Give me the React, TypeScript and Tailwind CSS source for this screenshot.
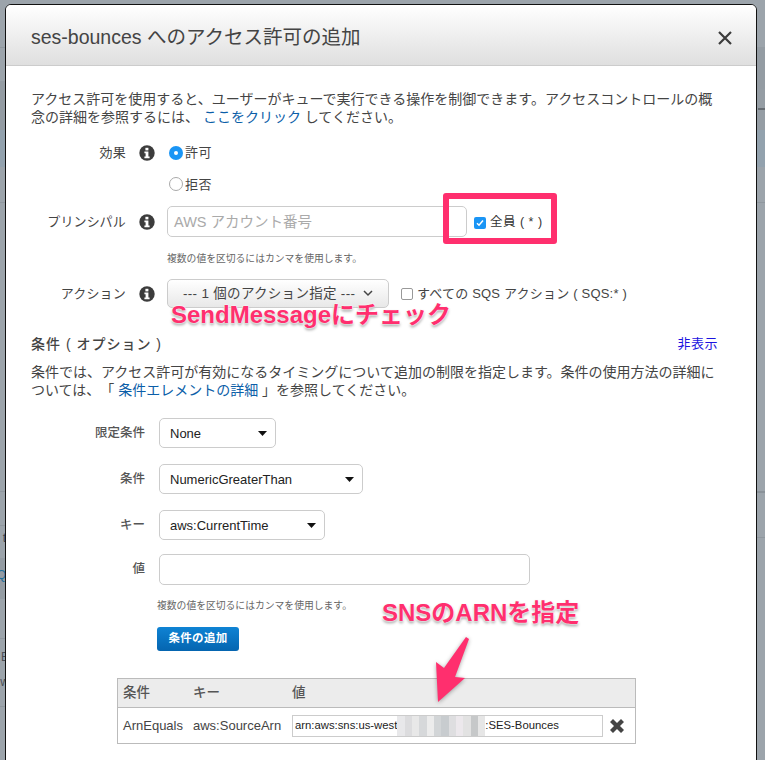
import React from "react";

const jp = "font-['Liberation_Sans','Noto_Sans_CJK_JP',sans-serif] [text-spacing-trim:space-all]";

function InfoIcon() {
  return (
    <svg width="16" height="16" viewBox="0 0 16 16" className="shrink-0">
      <circle cx="8" cy="8" r="7.7" fill="#3c3c3c" />
      <rect x="6.4" y="2.8" width="3" height="2.6" fill="#fff" />
      <path d="M5.4 6.6h4v5h1.2v1.6H5.4v-1.6h1.2V8.200H5.400z" fill="#fff" />
    </svg>
  );
}

function Caret() {
  return (
    <svg width="9" height="5" viewBox="0 0 9 5">
      <path d="M0 0h9L4.500 5z" fill="#111" />
    </svg>
  );
}

function Select({ width, value }: { width: string; value: string }) {
  return (
    <div
      className={`${width} h-[30px] flex items-center justify-between pl-[10px] pr-[8px] bg-white border border-[#ccc] rounded-[5px] text-[13px] text-[#222]`}
    >
      <span className="pt-[1px]">{value}</span>
      <Caret />
    </div>
  );
}

function PrincipalRow({ label, children }: { label: string; children: React.ReactNode }) {
  return (
    <div className="flex items-center">
      <div className="w-[95px] text-right text-[#444] text-[13px] tracking-[0.2px]">{label}</div>
      <div className="w-[41px] flex justify-center">
        <InfoIcon />
      </div>
      {children}
    </div>
  );
}

function ConditionRow({ label, children }: { label: string; children: React.ReactNode }) {
  return (
    <div className="flex items-center">
      <div className="w-[114px] text-right text-[#555] text-[12.500px] font-medium">{label}</div>
      <div className="ml-[14px]">{children}</div>
    </div>
  );
}

const mosaic = ["#e8e8ea", "#dcdcde", "#e8e8e8", "#d6d8da", "#ececec", "#d2d5d7", "#c8cccf", "#dedee0", "#ece8ec", "#e2e2e2", "#c6c8c9", "#e6e6e6"];

export default function App() {
  return (
    <div className={`relative w-[765px] h-[760px] overflow-hidden bg-[#9ca4ab] ${jp}`}>
      {/* page behind the dialog, only its edges show */}
      <div className="absolute left-0 top-0 w-[6px] h-full overflow-hidden">
        <div className="absolute inset-x-0 top-[47px] h-px bg-[#8f979e]" />
        <div className="absolute inset-x-0 top-[81px] h-[49px] bg-[#949ca3]" />
        <div className="absolute inset-x-0 top-[130px] h-[37px] bg-[#93a2ae]" />
        <div className="absolute inset-x-0 top-[202px] h-px bg-[#8f979e]" />
        <div className="absolute inset-x-0 top-[491px] h-px bg-[#8f979e]" />
        <div className="absolute inset-x-0 top-[525px] h-px bg-[#8f979e]" />
        <div className="absolute inset-x-0 top-[558px] h-[41px] bg-[#949ca3]" />
        <div className="absolute inset-x-0 top-[638px] h-px bg-[#8f979e]" />
        <div className="absolute inset-x-0 top-[706px] h-px bg-[#8f979e]" />
        <span className="absolute right-0 top-[531px] text-[12px] leading-[14px] text-[#3c4650]">t</span>
        <span className="absolute right-0 top-[568px] text-[12px] leading-[14px] text-[#1f6f9c]">Q</span>
        <span className="absolute right-[-3px] top-[650px] text-[12px] leading-[14px] text-[#4a5058]">E</span>
        <span className="absolute right-[-3px] top-[675px] text-[12px] leading-[14px] text-[#4a5058]">w</span>
      </div>
      <div className="absolute right-0 top-0 w-[9px] h-full overflow-hidden">
        <div className="absolute inset-x-0 top-[47px] h-[42px] bg-[#949ca3]" />
        <div className="absolute inset-x-0 top-[89px] h-[41px] bg-[#959da4]" />
        <div className="absolute right-0 w-[7px] top-[108px] h-[2px] bg-[#666c72]" />
        <div className="absolute inset-x-0 top-[130px] h-[37px] bg-[#93a2ae]" />
        <div className="absolute inset-x-0 top-[202px] h-px bg-[#8f979e]" />
        <div className="absolute inset-x-0 top-[491px] h-[2px] bg-[#8a9299]" />
        <div className="absolute inset-x-0 top-[537px] h-px bg-[#8f979e]" />
      </div>

      <div className="absolute left-[5px] top-[4px] w-[752px] h-[800px] bg-white border border-[#111] rounded-[6px] overflow-hidden">
        <div className="h-[61px] flex items-center justify-between pl-[25px] pr-[25px] pt-[6px] bg-gradient-to-b from-white to-[#dfdfdf] border-b border-[#ccc]">
          <h1 className="text-[19.500px] text-[#444] font-normal">ses-bounces へのアクセス許可の追加</h1>
          <svg width="14" height="14" viewBox="0 0 14 14" className="mr-[-1px]">
            <path d="M1 1l12 12M13 1L1 13" stroke="#3c3c3c" strokeWidth="2.200" />
          </svg>
        </div>

        <div className="pl-[25px] pr-[30px] pt-[24px]">
          <p className="text-[14px] leading-[18px] text-[#444] w-[695px]">
            アクセス許可を使用すると、ユーザーがキューで実行できる操作を制御できます。アクセスコントロールの概念の詳細を参照するには、{" "}
            <span className="text-[#0b5ea8]">ここをクリック</span>{" "}してください。
          </p>

          <div className="mt-[17px]">
            <PrincipalRow label="効果">
              <div className="flex items-center ml-[2px] text-[13px] text-[#444] tracking-[0.5px]">
                <span className="w-[14px] h-[14px] rounded-full bg-[#1a95f5] flex items-center justify-center mr-[2px]">
                  <span className="w-[4px] h-[4px] rounded-full bg-white" />
                </span>
                許可
              </div>
            </PrincipalRow>
            <div className="flex items-center mt-[12px] ml-[138px] text-[13px] text-[#444] tracking-[0.5px]">
              <span className="w-[14px] h-[14px] rounded-full bg-white border border-[#aaa] mr-[2px]" />
              拒否
            </div>

            <div className="mt-[12px]">
              <PrincipalRow label="プリンシパル">
                <div className="flex items-center">
                  <div className="w-[300px] h-[31px] flex items-center pl-[6px] pt-[2px] border border-[#ccc] rounded-[5px] text-[14.500px] text-[#aaa]">
                    AWS アカウント番号
                  </div>
                  <div className="flex items-center ml-[7px] pt-[2px] text-[12.500px] text-[#333] tracking-[0.5px]">
                    <span className="w-[12px] h-[12px] rounded-[2px] bg-[#1a95f5] flex items-center justify-center mr-[4px]">
                      <svg width="8" height="8" viewBox="0 0 8 8">
                        <path d="M1 4.200l2 2L7 1.400" fill="none" stroke="#fff" strokeWidth="1.500" />
                      </svg>
                    </span>
                    全員 ( * )
                  </div>
                </div>
              </PrincipalRow>
            </div>
            <p className="ml-[136px] mt-[15px] text-[9.800px] leading-[14px] text-[#666]">
              複数の値を区切るにはカンマを使用します。
            </p>

            <div className="mt-[13px]">
              <PrincipalRow label="アクション">
                <div className="flex items-center">
                  <div className="w-[222px] h-[29px] flex items-center pl-[15px] gap-[8px] border border-[#ccc] rounded-[5px] bg-gradient-to-b from-white to-[#e8e8e8] text-[13.500px] text-[#444] tracking-[0.3px] whitespace-nowrap">
                    <span className="pt-[1px]">--- 1 個のアクション指定 ---</span>
                    <svg width="10" height="7" viewBox="0 0 10 7" className="shrink-0">
                      <path d="M1 1l4 4 4-4" fill="none" stroke="#444" strokeWidth="1.500" />
                    </svg>
                  </div>
                  <div className="flex items-center ml-[12px] text-[13px] text-[#444] tracking-[0.2px] whitespace-nowrap">
                    <span className="w-[12px] h-[12px] rounded-[2px] border border-[#999] bg-white mr-[4px]" />
                    すべての SQS アクション ( SQS:* )
                  </div>
                </div>
              </PrincipalRow>
            </div>
          </div>

          <div className="flex items-center justify-between mt-[27px] w-[687px]">
            <h2 className="text-[14px] leading-[18px] text-[#444] font-medium tracking-[1px]">条件 ( オプション )</h2>
            <span className="text-[13px] leading-[18px] text-[#1a12e0] tracking-[0.5px]">非表示</span>
          </div>
          <p className="mt-[10px] text-[14px] leading-[18px] text-[#444] w-[695px]">
            条件では、アクセス許可が有効になるタイミングについて追加の制限を指定します。条件の使用方法の詳細については、「{" "}
            <span className="text-[#0b5ea8]">条件エレメントの詳細</span>{" "}」を参照してください。
          </p>

          <div className="mt-[19px] flex flex-col gap-[16px]">
            <ConditionRow label="限定条件">
              <Select width="w-[117px]" value="None" />
            </ConditionRow>
            <ConditionRow label="条件">
              <Select width="w-[204px]" value="NumericGreaterThan" />
            </ConditionRow>
            <ConditionRow label="キー">
              <Select width="w-[166px]" value="aws:CurrentTime" />
            </ConditionRow>
          </div>
          <div className="mt-[14px]">
            <ConditionRow label="値">
              <div className="w-[371px] h-[31px] bg-white border border-[#ccc] rounded-[5px]" />
            </ConditionRow>
          </div>
          <p className="ml-[126px] mt-[14px] text-[9.800px] leading-[14px] text-[#666]">
            複数の値を区切るにはカンマを使用します。
          </p>
          <button className="block ml-[126px] mt-[14px] w-[82px] h-[24px] rounded-[3px] bg-gradient-to-b from-[#0f83d4] to-[#0565b0] text-white text-[11.500px] font-bold tracking-[0.3px]">
            条件の追加
          </button>

          <div className="mt-[27px] ml-[86px] w-[519px] border border-[#bbb]">
            <div className="h-[29px] flex items-center bg-[#ececec] border-b border-[#bbb] text-[13.500px] font-medium text-[#555]">
              <span className="w-[70px] pl-[5px]">条件</span>
              <span className="w-[99px] pl-[5px]">キー</span>
              <span className="pl-[5px]">値</span>
            </div>
            <div className="h-[35px] flex items-center text-[13px] text-[#444]">
              <span className="w-[70px] pl-[5px]">ArnEquals</span>
              <span className="w-[99px] pl-[5px] whitespace-nowrap">aws:SourceArn</span>
              <div className="ml-[5px] w-[311px] h-[22px] flex items-center pl-[2px] border border-[#ccc] text-[11.300px] text-[#222]">
                arn:aws:sns:us-west
                <span className="flex h-[20px] w-[88px] shrink-0">
                  {mosaic.map((c, i) => (
                    <span key={i} className="flex-1 h-full" style={{ backgroundColor: c }} />
                  ))}
                </span>
                :SES-Bounces
              </div>
              <svg width="16" height="16" viewBox="0 0 16 16" className="ml-[6px]">
                <path d="M1 4l3-3 4 4 4-4 3 3-4 4 4 4-3 3-4-4-4 4-3-3 4-4z" fill="#444" />
              </svg>
            </div>
          </div>
        </div>
      </div>

      {/* annotations drawn on top of the screenshot */}
      <div className="absolute left-[443px] top-[193px] w-[114px] h-[51px] border-[6px] border-[#ff2f6e] rounded-[3px]" />
      <div className="absolute left-[171px] top-[301px] text-[24px] leading-[28px] font-bold text-[#ff2f6e] whitespace-nowrap [text-shadow:0_0_2px_#fff,0_0_2px_#fff,0_2px_3px_#999]">
        SendMessageにチェック
      </div>
      <div className="absolute left-[382px] top-[599px] text-[24px] leading-[28px] font-bold text-[#ff2f6e] whitespace-nowrap [text-shadow:0_0_2px_#fff,0_0_2px_#fff,0_2px_3px_#999]">
        SNSのARNを指定
      </div>
      <svg width="50" height="70" viewBox="0 0 50 70" className="absolute left-[430px] top-[634px] drop-shadow-[0_1px_2px_rgba(0,0,0,0.35)]">
        <path d="M36 3l3 2-14 38 10 1-27 24-2-40 8 6z" fill="#ff2f6e" />
      </svg>
    </div>
  );
}
